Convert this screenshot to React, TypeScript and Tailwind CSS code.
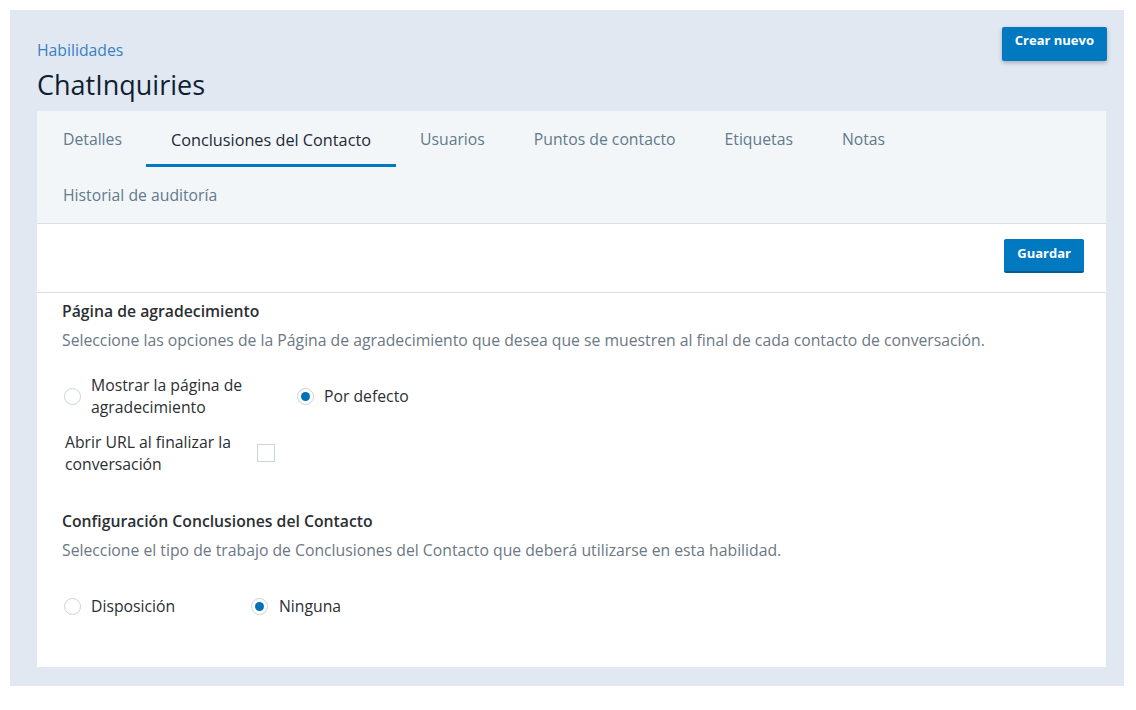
import { useState } from "react";

const tabs: string[] = [
  "Detalles",
  "Conclusiones del Contacto",
  "Usuarios",
  "Puntos de contacto",
  "Etiquetas",
  "Notas",
  "Historial de auditoría",
];

function Radio({ checked }: { checked: boolean }) {
  return (
    <span className="flex h-[17px] w-[17px] shrink-0 items-center justify-center rounded-full border border-[#c9d3dc] bg-white">
      {checked && <span className="h-[9px] w-[9px] rounded-full bg-[#0073b7]" />}
    </span>
  );
}

export default function App() {
  const [active, setActive] = useState<number>(1);
  const [thanks, setThanks] = useState<string>("default");
  const [wrap, setWrap] = useState<string>("none");
  const [openUrl, setOpenUrl] = useState<boolean>(false);

  return (
    <div className="min-h-[710px] bg-white py-[10px] pl-[10px] pr-[12px] text-[15.75px] text-[#2b2f33]" style={{ fontFamily: '"Open Sans", "Noto Sans", sans-serif' }}>
      <div className="bg-[#e1e8f1] pl-[27px] pr-[17px] pt-[17px] pb-[19px]">
        {/* Header */}
        <div className="flex items-start justify-between">
          <div className="pt-[13px]">
            <a href="#" className="block text-[15.75px] leading-5 text-[#3a7fc1]">
              Habilidades
            </a>
            <h1 className="mt-[7px] text-[27px] leading-[36px] text-[#0f1e33]">ChatInquiries</h1>
          </div>
          <button className="h-[34px] rounded-[2px] bg-[#0079c1] px-[13px] pb-[6px] text-[13px] font-bold text-white shadow-[0_2px_4px_rgba(0,0,0,0.25)]">
            Crear nuevo
          </button>
        </div>

        {/* Card */}
        <div className="mt-[8px] mr-[1px] bg-white">
          {/* Tabs */}
          <div className="flex flex-wrap border-b border-[#d6e0e9] bg-[#f2f6f9] pl-[1.5px]">
            {tabs.map((tab: string, i: number) => (
              <button
                key={tab}
                onClick={() => setActive(i)}
                className={`relative h-[56px] px-[24.5px] pt-[2px] ${
                  i === active ? "text-[16.25px] text-[#1d2a38]" : "text-[15.75px] text-[#627a8c]"
                }`}
              >
                {tab}
                {i === active && <span className="absolute bottom-0 left-0 h-[3px] w-full bg-[#0079c1]" />}
              </button>
            ))}
          </div>

          {/* Toolbar */}
          <div className="flex justify-end border-b border-[#d6e0e9] px-[22px] pt-[15px] pb-[19px]">
            <button className="h-[34px] rounded-[2px] border-b-2 border-[#0a5d93] bg-[#0079c1] px-[13px] pb-[2px] text-[13px] font-bold text-white">
              Guardar
            </button>
          </div>

          {/* Content */}
          <div className="px-[25px] pt-[7px] pb-[50px]">
            <h2 className="font-semibold leading-[22px] text-[#2b2f33]">Página de agradecimiento</h2>
            <p className="mt-[7px] leading-[22px] text-[#6c7883]">
              Seleccione las opciones de la Página de agradecimiento que desea que se muestren al final de cada contacto de conversación.
            </p>

            <div className="mt-[23px] flex items-center pl-[2px]">
              <label className="flex w-[233px] cursor-pointer items-center gap-[10px]" onClick={() => setThanks("show")}>
                <Radio checked={thanks === "show"} />
                <span className="w-[170px] leading-[22px]">Mostrar la página de agradecimiento</span>
              </label>
              <label className="flex cursor-pointer items-center gap-[10px]" onClick={() => setThanks("default")}>
                <Radio checked={thanks === "default"} />
                <span className="leading-[22px]">Por defecto</span>
              </label>
            </div>

            <div className="mt-[13px] flex items-center pl-[3px]">
              <span className="w-[192px] leading-[22px]">Abrir URL al finalizar la conversación</span>
              <button
                onClick={() => setOpenUrl(!openUrl)}
                className="h-[18px] w-[18px] border border-[#c9d3dc] bg-white"
                aria-label="Abrir URL"
              />
            </div>

            <h2 className="mt-[35px] font-semibold leading-[22px] text-[#2b2f33]">
              Configuración Conclusiones del Contacto
            </h2>
            <p className="mt-[7px] leading-[22px] text-[#6c7883]">
              Seleccione el tipo de trabajo de Conclusiones del Contacto que deberá utilizarse en esta habilidad.
            </p>

            <div className="mt-[34px] flex items-center pl-[2px]">
              <label className="flex w-[187px] cursor-pointer items-center gap-[10px]" onClick={() => setWrap("disp")}>
                <Radio checked={wrap === "disp"} />
                <span className="leading-[22px]">Disposición</span>
              </label>
              <label className="flex cursor-pointer items-center gap-[11px]" onClick={() => setWrap("none")}>
                <Radio checked={wrap === "none"} />
                <span className="leading-[22px]">Ninguna</span>
              </label>
            </div>
          </div>
        </div>
      </div>
    </div>
  );
}
